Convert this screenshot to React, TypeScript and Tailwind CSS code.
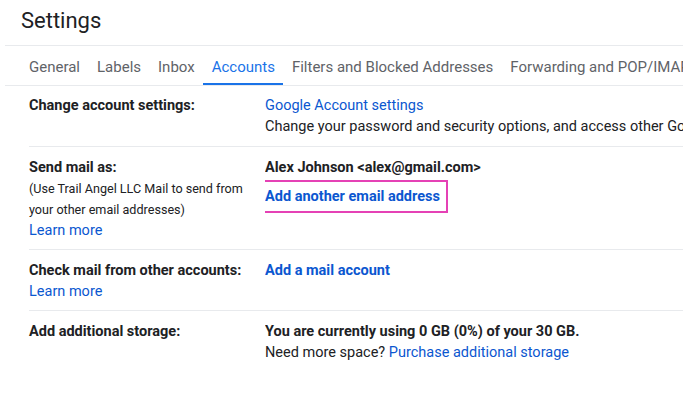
import clsx from 'clsx';

const tabs = ['General', 'Labels', 'Inbox', 'Accounts', 'Filters and Blocked Addresses', 'Forwarding and POP/IMAP'];

export default function App() {
    return (
        <div className="w-[683px] h-[413px] overflow-hidden bg-white text-[#202124] font-['Roboto','Liberation_Sans',sans-serif]">
            <div className="h-[45px] pl-[21px] pt-[6px] text-[22px] leading-[30px] text-[#202124]">Settings</div>
            <div className="ml-[5px] flex h-[41px] items-stretch overflow-hidden whitespace-nowrap border-y border-[#e8eaed] pl-[15.5px] pt-[3px] text-[15px]">
                {tabs.map((t) => (
                    <div
                        key={t}
                        className={clsx('relative flex shrink-0 items-center px-[8.5px]', t === 'Accounts' ? 'text-[#1a73e8]' : 'text-[#5f6368]')}
                    >
                        {t}
                        {t === 'Accounts' && <span className="absolute bottom-[-1px] left-0 right-0 h-[3px] bg-[#1a73e8]" />}
                    </div>
                ))}
            </div>

            <div className="pl-[29px] text-[14.5px] leading-[21px]">
                {/* Change account settings */}
                <div className="flex border-b border-[#e8eaed] py-[9px]">
                    <div className="w-[236px] shrink-0 font-bold">Change account settings:</div>
                    <div className="min-w-0 flex-1 overflow-hidden whitespace-nowrap">
                        <div className="text-[#0b57d0]">Google Account settings</div>
                        <div>Change your password and security options, and access other Google services.</div>
                    </div>
                </div>

                {/* Send mail as */}
                <div className="flex border-b border-[#e8eaed] pb-[8px] pt-[10px]">
                    <div className="w-[236px] shrink-0">
                        <div className="font-bold">Send mail as:</div>
                        <div className="text-[12.6px]">(Use Trail Angel LLC Mail to send from</div>
                        <div className="text-[12.6px]">your other email addresses)</div>
                        <div className="text-[#0b57d0]">Learn more</div>
                    </div>
                    <div className="min-w-0 flex-1 overflow-hidden whitespace-nowrap">
                        <div className="font-bold">Alex Johnson &lt;alex@gmail.com&gt;</div>
                        <div className="mt-[2px] -ml-[8px] w-fit border-2 border-[#e541b5] px-[6px] py-[4px] font-bold text-[#0b57d0]">
                            Add another email address
                        </div>
                    </div>
                </div>

                {/* Check mail */}
                <div className="flex border-b border-[#e8eaed] pb-[8px] pt-[10px]">
                    <div className="w-[236px] shrink-0">
                        <div className="font-bold">Check mail from other accounts:</div>
                        <div className="text-[#0b57d0]">Learn more</div>
                    </div>
                    <div className="min-w-0 flex-1 overflow-hidden whitespace-nowrap">
                        <div className="font-bold text-[#0b57d0]">Add a mail account</div>
                    </div>
                </div>

                {/* Storage */}
                <div className="flex pb-[8px] pt-[10px]">
                    <div className="w-[236px] shrink-0 font-bold">Add additional storage:</div>
                    <div className="min-w-0 flex-1 overflow-hidden whitespace-nowrap">
                        <div className="font-bold">You are currently using 0 GB (0%) of your 30 GB.</div>
                        <div>
                            Need more space? <span className="text-[#0b57d0]">Purchase additional storage</span>
                        </div>
                    </div>
                </div>
            </div>
        </div>
    );
}
